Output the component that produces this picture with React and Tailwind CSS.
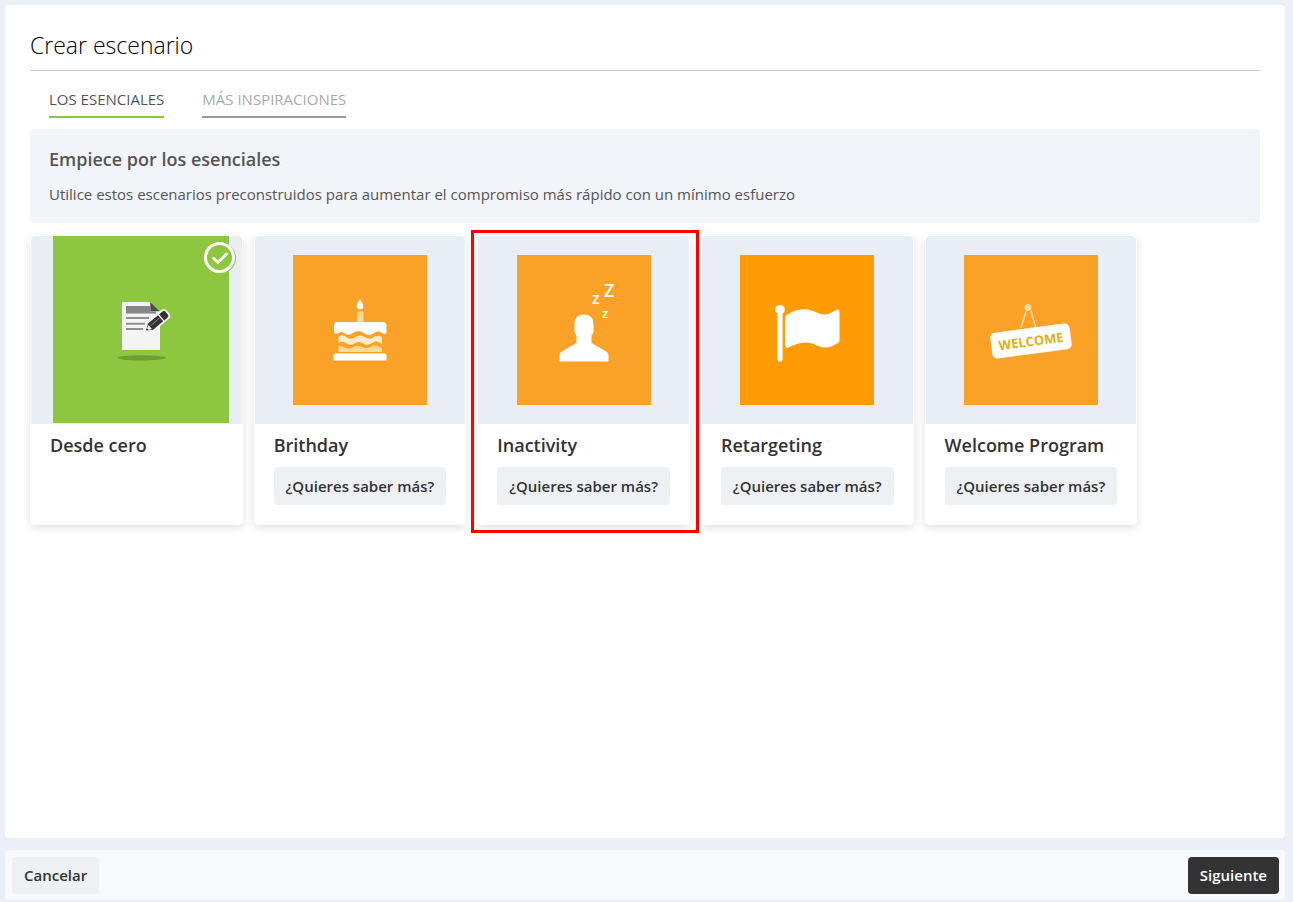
import { useState } from 'react'

// ── Illustrations ───────────────────────────────────────────────────────────
function BlankDoc() {
  return (
    <svg viewBox="0 0 176 187" className="w-[176px] h-[187px]">
      <rect width="176" height="187" fill="#8dc63f" />
      <ellipse cx="88.5" cy="121.8" rx="24.5" ry="2.6" fill="#6f9e30" />
      <path d="M69 66h28.5l9.5 9.5V114H69z" fill="#f4f4f4" />
      <path d="M73 70h24v5.5h6v2H73z" fill="#868686" />
      <path d="M97.3 66l9.4 9.2h-9.4z" fill="#4b4b4d" />
      <path d="M73 82h23M73 87.7h19M73 93h17" stroke="#8f8f8f" strokeWidth="2" />
      <g transform="translate(93 94.5) rotate(-40)">
        <path d="M-1 0L5-5H25Q28-5 28-2V2Q28 5 25 5H5z" fill="#f4f4f4" stroke="#f4f4f4" strokeWidth="1.5" strokeLinejoin="round" />
        <path d="M0 0L6-4H19V4H6z" fill="#333" />
        <path d="M20.5-4H24.5Q27-4 27-2V2Q27 4 24.5 4H20.5z" fill="#333" />
        <path d="M7-.8H18" stroke="#999" strokeWidth=".8" />
        <path d="M2.4-1.4L5.5-2.5V2.5L2.4 1.4z" fill="#f4f4f4" />
      </g>
    </svg>
  )
}

function Cake() {
  return (
    <svg viewBox="0 0 134 150" className="w-[134px] h-[150px]">
      <rect width="134" height="150" fill="#faa127" />
      <path d="M67 44c2 3.500 3.300 5.500 3.300 7a3.300 3.300 0 0 1-6.600 0c0-1.500 1.300-3.500 3.300-7z" fill="#fff" />
      <path d="M64 57q3-1.500 6.500 0v10H64z" fill="#f7dc97" />
      <path d="M44.500 67h45.500a3.500 3.500 0 0 1 3.500 3.500v7.500q-1.500 1.500-3.500.5c-4-3-6-2.500-9-.5-4 2.700-6 2.500-10 0-4-2.700-7-2.700-11 0-4 2.500-6 2.200-9-.2-3-1.700-4.500 0-7 .7q-3 .5-3-1.500v-6.500a3.500 3.500 0 0 1 3.500-3.500z" fill="#fff" />
      <path d="M45.500 82c3-2.500 5-2 8 .2 3.500 2.300 6 1.800 9-.2 3.500-2.300 6-2 9.500 0s6 2 9 0 5.500-1.800 8 .5V89c-3-1-4.500-3.500-8-2-3 1.300-5 3.300-9 2.500-4-2-6-3.500-9.500-1.500s-6 2.500-9 .5-5-2.300-8-.5z" fill="#fbebc8" />
      <path d="M45.500 91.500c3-1.500 5 .5 8 1.700 4 1 6-1.200 9-2.200 3.500-1 6 1 9.500 2 4 .500 6-1.500 9-2.500 3.500-.500 5 1 8 2.500V97H45.500z" fill="#f7dc97" />
      <path d="M42.500 98.500h49q2 0 2 2v5h-53v-5q0-2 2-2z" fill="#fff" />
    </svg>
  )
}

function Sleeper() {
  return (
    <svg viewBox="0 0 134 150" className="w-[134px] h-[150px] font-['Open_Sans',sans-serif] font-semibold">
      <rect width="134" height="150" fill="#faa127" />
      <path d="M57.500 69c0-6.500 4-9.500 9.500-9.500s9.500 3 9.500 9.500v7c0 2-1 3-2 4.500v7.500l14 8q2.800 1.700 3 4v5.500q0 1-1 1H43.500q-1 0-1-1v-5.500q.2-2.300 3-4l14-8v-7.500c-1-1.500-2-2.500-2-4.500z" fill="#fff" />
      <text x="75" y="49" fontSize="16" fill="#fff">z</text>
      <text x="87" y="42" fontSize="18" fill="#fff">Z</text>
      <text x="85" y="63" fontSize="13" fill="#fff">z</text>
    </svg>
  )
}

function Flag() {
  return (
    <svg viewBox="0 0 134 150" className="w-[134px] h-[150px]">
      <rect width="134" height="150" fill="#ff9b04" />
      <circle cx="40" cy="54.700" r="4.800" fill="#fff" />
      <path d="M40 56v48" stroke="#fff" strokeWidth="5.200" strokeLinecap="round" />
      <path d="M46 60.500c7-5 14-7 22-6 8 1.500 10 5 17 5 5 0 8-3.500 12-5q2.500-.5 2.500 2v29q0 1.500-1.500 2.500c-5 3-9 5-14.500 4.500-7-1-10-5-17-5-7-.2-12 2-18 5q-3.500 1-3.500-1.500V63q0-1.500 1-2.500z" fill="#fff" />
    </svg>
  )
}

function WelcomeSign() {
  return (
    <svg viewBox="0 0 134 150" className="w-[134px] h-[150px] font-['Open_Sans',sans-serif] font-bold">
      <rect width="134" height="150" fill="#faa127" />
      <path d="M62 56l-5 17M67 56l4.500 15.500" stroke="#fbe0ad" strokeWidth="1.500" fill="none" />
      <circle cx="64" cy="52.500" r="3.600" fill="#f7dc97" />
      <g transform="translate(67 86) rotate(-7.500)">
        <rect x="-40" y="-13" width="80" height="26" rx="5" fill="#fff" />
        <text x="0" y="5" textAnchor="middle" fontSize="13" fill="#e5ad1c">WELCOME</text>
      </g>
    </svg>
  )
}

function SelectedBadge() {
  return (
    <svg viewBox="0 0 32 32" className="absolute top-[6px] right-[6px] w-8 h-8">
      <circle cx="16.500" cy="16" r="15.500" fill="#8dc63f" />
      <circle cx="15.500" cy="15.500" r="14" fill="#8dc63f" stroke="#fff" strokeWidth="3" />
      <path d="M9.500 16.200l4.500 4.300 8.500-8.500" fill="none" stroke="#fff" strokeWidth="2.800" strokeLinecap="round" strokeLinejoin="round" />
    </svg>
  )
}

const TABS = ['LOS ESENCIALES', 'MÁS INSPIRACIONES']

const SCENARIOS = [
  { name: 'Desde cero', Art: BlankDoc, selected: true },
  { name: 'Brithday', Art: Cake, more: true },
  { name: 'Inactivity', Art: Sleeper, more: true, highlighted: true },
  { name: 'Retargeting', Art: Flag, more: true },
  { name: 'Welcome Program', Art: WelcomeSign, more: true },
]

function ScenarioCard({ name, Art, more, selected, highlighted }) {
  return (
    <article className="relative h-[290px] bg-white rounded border border-white shadow-[0_3px_10px_rgba(0,0,0,0.12)]">
      <div
        className={`relative h-[188px] bg-[#e9edf5] rounded-t flex justify-center overflow-hidden
          ${selected ? 'items-start pl-[10px]' : 'items-center'}`}
      >
        <Art />
        {selected && <SelectedBadge />}
      </div>
      <div className="px-[19px] pt-[7px]">
        <h3 className="text-[18px] leading-7 font-semibold text-[#333]">{name}</h3>
        {more && (
          <button className="mt-2 h-[38px] w-full rounded bg-[#edf1f4] text-[15px] font-semibold whitespace-nowrap cursor-pointer">
            ¿Quieres saber más?
          </button>
        )}
      </div>
      {highlighted && (
        <div className="absolute -top-[6px] -bottom-[9px] -left-[7px] -right-[10px] border-3 border-[#ff0000] pointer-events-none" />
      )}
    </article>
  )
}

export default function App() {
  const [tab, setTab] = useState(0)

  return (
    <div className="min-h-screen flex flex-col gap-3 bg-[#ebf0f8] pt-[5px] pb-[2px] pl-[5px] pr-2 font-['Open_Sans',sans-serif] text-[#333]">
      <main className="flex-1 bg-white rounded px-[25px] pt-6">
        <h1 className="text-[23px] leading-8 pb-[9px] border-b border-[#c8c8c8] font-light text-black">Crear escenario</h1>

        {/* Tabs */}
        <div role="tablist" className="flex gap-[38px] px-[19px] pt-[18px] text-[15px]">
          {TABS.map((label, i) => (
            <button
              key={label}
              role="tab"
              aria-selected={tab === i}
              onClick={() => setTab(i)}
              className={`h-[29px] pb-[7px] leading-5 border-b-2 cursor-pointer
                ${tab === i ? 'border-[#8dc63f] text-[#555]' : 'border-[#999] text-[#aaa]'}`}
            >
              {label}
            </button>
          ))}
        </div>

        {/* Intro */}
        <section className="mt-[11px] h-[94px] rounded bg-[#f1f4f9] px-[19px] pt-4 text-[#555]">
          <h2 className="text-[18px] leading-7 font-semibold">Empiece por los esenciales</h2>
          <p className="mt-[9px] text-[15px] leading-6">
            Utilice estos escenarios preconstruidos para aumentar el compromiso más rápido con un mínimo esfuerzo
          </p>
        </section>

        {/* Scenarios */}
        <ul className="mt-3 grid grid-cols-11">
          {SCENARIOS.map(s => (
            <li key={s.name} className="col-span-2 pr-[11px]">
              <ScenarioCard {...s} />
            </li>
          ))}
        </ul>
      </main>

      <footer className="h-[50px] flex items-center justify-between rounded bg-[#f7f9fc] pl-[7px] pr-[6px] text-[15px] font-semibold">
        <button className="h-[37px] px-3 rounded bg-[#edf1f4] cursor-pointer">Cancelar</button>
        <button className="h-[37px] px-3 rounded bg-[#333] text-white cursor-pointer">Siguiente</button>
      </footer>
    </div>
  )
}
